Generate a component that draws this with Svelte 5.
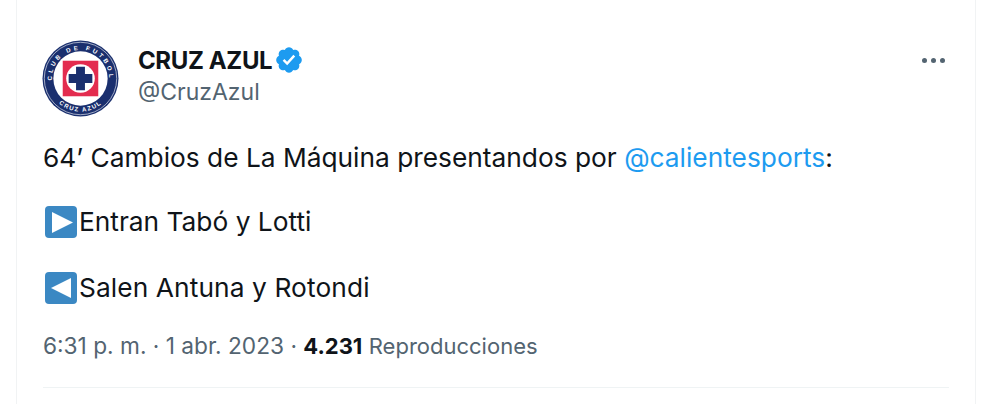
<script>
  const name = 'CRUZ AZUL';
</script>

<div class="page">
  <article class="card">
    <header class="head">
      <svg class="logo" viewBox="0 0 78 78" aria-label="Cruz Azul">
        <defs>
          <path id="top" d="M18.5 59.5A29 29 0 1 1 59.5 59.5" />
          <path id="bot" d="M5.5 39A33.5 33.5 0 0 0 72.5 39" />
        </defs>
        <circle cx="39" cy="39" r="38.5" fill="#1a2f6e" />
        <circle cx="39" cy="39" r="36.7" fill="none" stroke="#dfe3ec" stroke-width=".7" />
        <circle cx="39" cy="39" r="27.5" fill="#fff" />
        <text class="ring top"><textPath href="#top" startOffset="50%" text-anchor="middle">CLUB DE FUTBOL</textPath></text>
        <text class="ring bot"><textPath href="#bot" startOffset="50%" text-anchor="middle">CRUZ AZUL</textPath></text>
        <rect x="21" y="21" width="36" height="36" fill="#e32c4f" />
        <circle cx="39" cy="39" r="14.5" fill="#fff" />
        <path d="M34.5 27h9v7.5H51v9h-7.5V51h-9v-7.5H27v-9h7.5z" fill="#1a2f6e" />
      </svg>
      <div class="who">
        <div class="nameline">
          <span class="name">{name}</span>
          <svg class="badge" viewBox="0 0 24 24"><path fill="#1d9bf0" d="M22.25 12c0-1.43-.88-2.67-2.19-3.34.46-1.39.2-2.9-.81-3.91s-2.52-1.27-3.91-.81c-.66-1.31-1.91-2.19-3.34-2.19s-2.67.88-3.33 2.19c-1.4-.46-2.91-.2-3.92.81s-1.26 2.52-.8 3.91c-1.31.67-2.2 1.91-2.2 3.34s.89 2.67 2.2 3.34c-.46 1.39-.21 2.9.8 3.91s2.52 1.26 3.91.81c.67 1.31 1.91 2.19 3.34 2.19s2.68-.88 3.34-2.19c1.39.45 2.9.2 3.91-.81s1.27-2.52.81-3.91c1.31-.67 2.19-1.91 2.19-3.34z" /><path fill="#fff" d="M10.54 16.2l-3.6-3.6 1.41-1.42 2.12 2.13 5.01-5.46 1.47 1.35z" /></svg>
        </div>
        <div class="handle">@CruzAzul</div>
      </div>
      <div class="more"><i></i><i></i><i></i></div>
    </header>

    <p class="line first">64’ Cambios de La Máquina presentandos por <span class="link">@calientesports</span>:</p>
    <p class="line l2">
      <svg class="emoji" viewBox="0 0 32 32"><rect width="32" height="32" rx="4" fill="#3b88c3" /><path d="M7 6 28 16.5 7 27z" fill="#fff" /></svg>Entran Tabó y Lotti
    </p>
    <p class="line l3 wide">
      <svg class="emoji" viewBox="0 0 32 32"><rect width="32" height="32" rx="4" fill="#3b88c3" /><path d="M26 6 6 16l20 10z" fill="#fff" /></svg>Salen Antuna y Rotondi
    </p>

    <div class="meta">6:31 p. m. · 1 abr. 2023 ·{' '}<b>4.231</b>{' '}<span class="rep">Reproducciones</span></div>
    <div class="rule"></div>
  </article>
</div>

<style>
  :global(body) {
    margin: 0;
    background: #fff;
  }
  .page {
    width: 998px;
    height: 404px;
    overflow: hidden;
    font-family: Inter, "Liberation Sans", sans-serif;
    color: #0f1419;
  }
  .card {
    box-sizing: border-box;
    width: 960px;
    height: 404px;
    margin-left: 16px;
    padding: 40px 26px 0 26px;
    border-left: 1px solid #f1f3f4;
    border-right: 1px solid #f1f3f4;
  }
  .head {
    display: flex;
    align-items: flex-start;
    height: 78px;
  }
  .logo {
    width: 77px;
    height: 77px;
    flex: none;
    margin-left: -1px;
  }
  .ring {
    font: 700 6.2px "Liberation Sans", sans-serif;
    fill: #fff;
  }
  .ring.top {
    letter-spacing: 2.9px;
  }
  .ring.bot {
    letter-spacing: 1.4px;
  }
  .who {
    margin-left: 19px;
    padding-top: 4px;
  }
  .nameline {
    display: flex;
    align-items: center;
    height: 32px;
  }
  .name {
    font-size: 24px;
    font-weight: 700;
    letter-spacing: -0.38px;
  }
  .badge {
    width: 30px;
    height: 30px;
    margin-left: 2px;
  }
  .handle {
    margin-top: 2px;
    font-size: 23px;
    line-height: 28px;
    color: #536471;
  }
  .more {
    margin-left: auto;
    margin-top: 18px;
    margin-right: 4px;
    display: flex;
    gap: 4px;
  }
  .more i {
    display: block;
    width: 5px;
    height: 5px;
    border-radius: 50%;
    background: #536471;
  }
  .line {
    margin: 0;
    font-size: 26.3px;
    line-height: 32px;
    white-space: nowrap;
    display: flex;
    align-items: center;
  }
  .first {
    display: block;
    margin-top: 24px;
  }
  .l2 {
    margin-top: 32px;
  }
  .l3 {
    margin-top: 34px;
  }
  .wide {
    letter-spacing: 0.1px;
  }
  .link {
    color: #1d9bf0;
  }
  .emoji {
    width: 32px;
    height: 32px;
    margin: 0 2px 0 2px;
    flex: none;
  }
  .meta {
    margin-top: 28px;
    font-size: 22.7px;
    line-height: 28px;
    color: #536471;
    white-space: nowrap;
  }
  .meta b {
    color: #0f1419;
    font-weight: 700;
    font-size: 22px;
  }
  .rep {
    font-size: 22px;
  }
  .rule {
    margin-top: 27px;
    height: 1px;
    background: #eff3f4;
  }
</style>
